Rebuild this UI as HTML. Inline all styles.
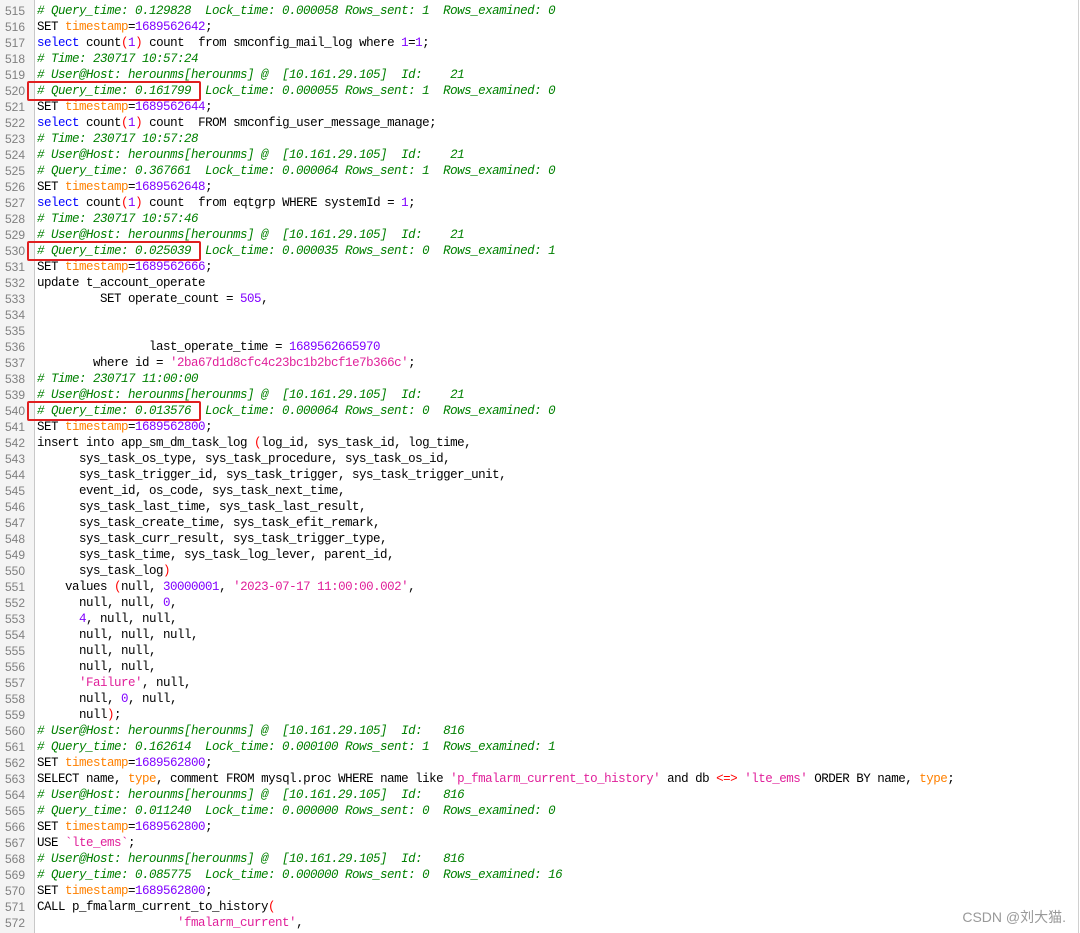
<!DOCTYPE html>
<html><head><meta charset="utf-8"><style>
body{margin:0;width:1080px;height:933px;overflow:hidden;background:#fff;position:relative;font-family:"Liberation Mono",monospace;font-size:12.5px;letter-spacing:-0.5px;}
.g{position:absolute;left:0;top:0;width:34px;height:933px;background:#f4f4f4;border-right:1px solid #c8c8c8;}
.r{position:absolute;right:1px;top:0;width:1px;height:933px;background:#d0d0d0}
.ln{position:absolute;top:3px;left:0;width:25px;text-align:right;color:#808080;line-height:16px;font-family:"Liberation Sans",sans-serif;font-size:12px;letter-spacing:0}
.code{position:absolute;top:3px;left:37px;line-height:16px;white-space:pre;color:#000}
.c{color:#008000;font-style:italic}.o{color:#ff8000}.n{color:#8000ff}.k{color:#0000ff}.p{color:#ff0000}.s{color:#e0209a}
.box{position:absolute;left:27px;width:170px;height:16px;border:2px solid #e02020;border-radius:2px}
.wm{position:absolute;right:14px;bottom:6px;color:#999;font-family:"Liberation Sans","Noto Sans CJK SC",sans-serif;font-size:14px;letter-spacing:0}
</style></head><body>
<div class="g"></div><div class="r"></div>
<div class="ln">515<br>516<br>517<br>518<br>519<br>520<br>521<br>522<br>523<br>524<br>525<br>526<br>527<br>528<br>529<br>530<br>531<br>532<br>533<br>534<br>535<br>536<br>537<br>538<br>539<br>540<br>541<br>542<br>543<br>544<br>545<br>546<br>547<br>548<br>549<br>550<br>551<br>552<br>553<br>554<br>555<br>556<br>557<br>558<br>559<br>560<br>561<br>562<br>563<br>564<br>565<br>566<br>567<br>568<br>569<br>570<br>571<br>572</div>
<div class="code"><span class="c"># Query_time: 0.129828  Lock_time: 0.000058 Rows_sent: 1  Rows_examined: 0</span>
SET <span class="o">timestamp</span>=<span class="n">1689562642</span>;
<span class="k">select</span> count<span class="p">(</span><span class="n">1</span><span class="p">)</span> count  from smconfig_mail_log where <span class="n">1</span>=<span class="n">1</span>;
<span class="c"># Time: 230717 10:57:24</span>
<span class="c"># User@Host: herounms[herounms] @  [10.161.29.105]  Id:    21</span>
<span class="c"># Query_time: 0.161799  Lock_time: 0.000055 Rows_sent: 1  Rows_examined: 0</span>
SET <span class="o">timestamp</span>=<span class="n">1689562644</span>;
<span class="k">select</span> count<span class="p">(</span><span class="n">1</span><span class="p">)</span> count  FROM smconfig_user_message_manage;
<span class="c"># Time: 230717 10:57:28</span>
<span class="c"># User@Host: herounms[herounms] @  [10.161.29.105]  Id:    21</span>
<span class="c"># Query_time: 0.367661  Lock_time: 0.000064 Rows_sent: 1  Rows_examined: 0</span>
SET <span class="o">timestamp</span>=<span class="n">1689562648</span>;
<span class="k">select</span> count<span class="p">(</span><span class="n">1</span><span class="p">)</span> count  from eqtgrp WHERE systemId = <span class="n">1</span>;
<span class="c"># Time: 230717 10:57:46</span>
<span class="c"># User@Host: herounms[herounms] @  [10.161.29.105]  Id:    21</span>
<span class="c"># Query_time: 0.025039  Lock_time: 0.000035 Rows_sent: 0  Rows_examined: 1</span>
SET <span class="o">timestamp</span>=<span class="n">1689562666</span>;
update t_account_operate
         SET operate_count = <span class="n">505</span>,


                last_operate_time = <span class="n">1689562665970</span>
        where id = <span class="s">'2ba67d1d8cfc4c23bc1b2bcf1e7b366c'</span>;
<span class="c"># Time: 230717 11:00:00</span>
<span class="c"># User@Host: herounms[herounms] @  [10.161.29.105]  Id:    21</span>
<span class="c"># Query_time: 0.013576  Lock_time: 0.000064 Rows_sent: 0  Rows_examined: 0</span>
SET <span class="o">timestamp</span>=<span class="n">1689562800</span>;
insert into app_sm_dm_task_log <span class="p">(</span>log_id, sys_task_id, log_time,
      sys_task_os_type, sys_task_procedure, sys_task_os_id,
      sys_task_trigger_id, sys_task_trigger, sys_task_trigger_unit,
      event_id, os_code, sys_task_next_time,
      sys_task_last_time, sys_task_last_result,
      sys_task_create_time, sys_task_efit_remark,
      sys_task_curr_result, sys_task_trigger_type,
      sys_task_time, sys_task_log_lever, parent_id,
      sys_task_log<span class="p">)</span>
    values <span class="p">(</span>null, <span class="n">30000001</span>, <span class="s">'2023-07-17 11:00:00.002'</span>,
      null, null, <span class="n">0</span>,
      <span class="n">4</span>, null, null,
      null, null, null,
      null, null,
      null, null,
      <span class="s">'Failure'</span>, null,
      null, <span class="n">0</span>, null,
      null<span class="p">)</span>;
<span class="c"># User@Host: herounms[herounms] @  [10.161.29.105]  Id:   816</span>
<span class="c"># Query_time: 0.162614  Lock_time: 0.000100 Rows_sent: 1  Rows_examined: 1</span>
SET <span class="o">timestamp</span>=<span class="n">1689562800</span>;
SELECT name, <span class="o">type</span>, comment FROM mysql.proc WHERE name like <span class="s">'p_fmalarm_current_to_history'</span> and db <span class="p">&lt;=&gt;</span> <span class="s">'lte_ems'</span> ORDER BY name, <span class="o">type</span>;
<span class="c"># User@Host: herounms[herounms] @  [10.161.29.105]  Id:   816</span>
<span class="c"># Query_time: 0.011240  Lock_time: 0.000000 Rows_sent: 0  Rows_examined: 0</span>
SET <span class="o">timestamp</span>=<span class="n">1689562800</span>;
USE <span class="s">`lte_ems`</span>;
<span class="c"># User@Host: herounms[herounms] @  [10.161.29.105]  Id:   816</span>
<span class="c"># Query_time: 0.085775  Lock_time: 0.000000 Rows_sent: 0  Rows_examined: 16</span>
SET <span class="o">timestamp</span>=<span class="n">1689562800</span>;
CALL p_fmalarm_current_to_history<span class="p">(</span>
                    <span class="s">'fmalarm_current'</span>,</div>
<div class="box" style="top:81px"></div>
<div class="box" style="top:241px"></div>
<div class="box" style="top:401px"></div>
<div class="wm">CSDN @刘大猫.</div>
</body></html>
